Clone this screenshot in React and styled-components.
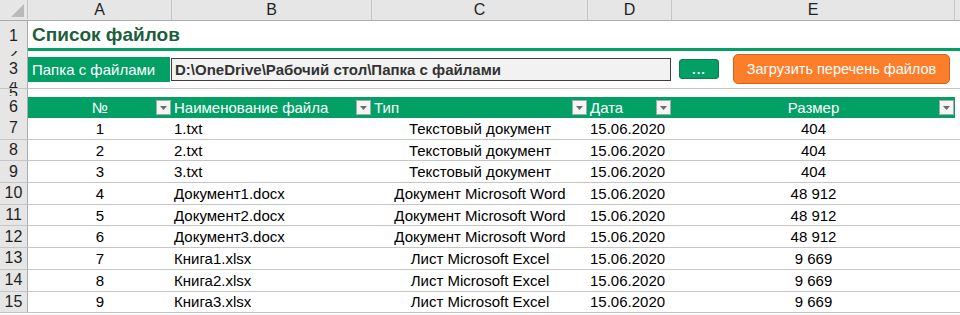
import styled, { createGlobalStyle } from "styled-components";

const GREEN = "#03a066";
const WIDTHS = [144, 200, 216, 84, 283];
const LETTERS = ["A", "B", "C", "D", "E"];

const files = [
  [1, "1.txt", "Текстовый документ", "15.06.2020", "404"],
  [2, "2.txt", "Текстовый документ", "15.06.2020", "404"],
  [3, "3.txt", "Текстовый документ", "15.06.2020", "404"],
  [4, "Документ1.docx", "Документ Microsoft Word", "15.06.2020", "48 912"],
  [5, "Документ2.docx", "Документ Microsoft Word", "15.06.2020", "48 912"],
  [6, "Документ3.docx", "Документ Microsoft Word", "15.06.2020", "48 912"],
  [7, "Книга1.xlsx", "Лист Microsoft Excel", "15.06.2020", "9 669"],
  [8, "Книга2.xlsx", "Лист Microsoft Excel", "15.06.2020", "9 669"],
  [9, "Книга3.xlsx", "Лист Microsoft Excel", "15.06.2020", "9 669"],
];

const headers = [
  { text: "№", align: "center" },
  { text: "Наименование файла", align: "left" },
  { text: "Тип", align: "left" },
  { text: "Дата", align: "left" },
  { text: "Размер", align: "center" },
];

const dataAlign = ["center", "left", "center", "left", "center"];

export default function App() {
  return (
    <>
      <GlobalStyle />
      <Sheet>
        <Row $h={21}>
          <Corner />
          {LETTERS.map((l, i) => (
            <ColHead key={l} $w={WIDTHS[i]}>{l}</ColHead>
          ))}
          <ColHead $w={10} />
        </Row>

        <Row $h={30}>
          <RowHead>1</RowHead>
          <TitleCell>Список файлов</TitleCell>
        </Row>
        <Row $h={5}>
          <RowHead $tiny>2</RowHead>
        </Row>

        <Row $h={26}>
          <RowHead>3</RowHead>
          <FolderLabel>Папка с файлами</FolderLabel>
          <PathArea>
            <PathBox>D:\OneDrive\Рабочий стол\Папка с файлами</PathBox>
          </PathArea>
          <ButtonArea>
            <DotsButton>...</DotsButton>
            <LoadButton>Загрузить перечень файлов</LoadButton>
          </ButtonArea>
        </Row>
        <Row $h={7} $line>
          <RowHead $tiny>4</RowHead>
        </Row>
        <Row $h={7}>
          <RowHead $tiny>5</RowHead>
        </Row>

        <Row $h={22}>
          <RowHead>6</RowHead>
          {headers.map((h, i) => (
            <HeadCell key={h.text} $w={WIDTHS[i]} $align={h.align}>
              {h.text}
              <Filter>
                <svg width="7" height="4" viewBox="0 0 7 4">
                  <path d="M0 0h7L3.5 4z" fill="#6b6b6b" />
                </svg>
              </Filter>
            </HeadCell>
          ))}
        </Row>

        {files.map((f, r) => (
          <Row key={r} $h={21.7} $line>
            <RowHead>{r + 7}</RowHead>
            {f.map((v, i) => (
              <Cell key={i} $w={WIDTHS[i]} $align={dataAlign[i]}>
                {v}
              </Cell>
            ))}
          </Row>
        ))}
      </Sheet>
    </>
  );
}

const GlobalStyle = createGlobalStyle`
  body {
    margin: 0;
    background: #ffffff;
    font-family: "Liberation Sans", Arial, sans-serif;
    overflow: hidden;
  }
`;

const Sheet = styled.div`
  width: 960px;
  height: 315px;
  overflow: hidden;
  display: flex;
  flex-direction: column;
  font-size: 15px;
  color: #000;
`;

const Row = styled.div`
  display: flex;
  flex: none;
  height: ${(p) => p.$h}px;
  box-sizing: border-box;
  border-bottom: ${(p) => (p.$line ? "1px solid #c6c6c6" : "none")};
`;

const Corner = styled.div`
  width: 28px;
  flex: none;
  background: #e6e6e6;
  border-right: 1px solid #c6c6c6;
  border-bottom: 1px solid #ababab;
  box-sizing: border-box;
  position: relative;
  &::after {
    content: "";
    position: absolute;
    right: 3px;
    bottom: 3px;
    border-style: solid;
    border-width: 0 0 13px 13px;
    border-color: transparent transparent #b9b9b9 transparent;
  }
`;

const ColHead = styled.div`
  width: ${(p) => p.$w}px;
  flex: none;
  box-sizing: border-box;
  background: #e6e6e6;
  border-right: 1px solid #c6c6c6;
  border-bottom: 1px solid #ababab;
  display: flex;
  align-items: center;
  justify-content: center;
  font-size: 16px;
  color: #1f1f1f;
`;

const RowHead = styled.div`
  width: 28px;
  flex: none;
  box-sizing: border-box;
  background: #e6e6e6;
  border-right: 1px solid #ababab;
  border-bottom: 1px solid #c6c6c6;
  margin-bottom: -1px;
  display: flex;
  align-items: center;
  justify-content: center;
  overflow: hidden;
  font-size: 16px;
  line-height: ${(p) => (p.$tiny ? "5px" : "normal")};
  color: #1f1f1f;
`;

const TitleCell = styled.div`
  flex: 1;
  box-sizing: border-box;
  border-bottom: 3px solid ${GREEN};
  display: flex;
  align-items: center;
  padding-left: 4px;
  font-size: 19px;
  font-weight: bold;
  color: #1d5e3c;
`;

const FolderLabel = styled.div`
  width: 142px;
  margin-top: 1px;
  flex: none;
  background: ${GREEN};
  color: #fff;
  display: flex;
  align-items: center;
  padding-left: 4px;
  box-sizing: border-box;
`;

const PathArea = styled.div`
  width: 502px;
  flex: none;
  display: flex;
  align-items: center;
  padding-left: 1px;
  box-sizing: border-box;
`;

const PathBox = styled.div`
  width: 500px;
  height: 23px;
  box-sizing: border-box;
  background: #f2f2f2;
  border: 1px solid #3f3f3f;
  display: flex;
  align-items: center;
  padding-left: 3px;
  font-weight: bold;
  color: #333;
`;

const ButtonArea = styled.div`
  flex: 1;
  display: flex;
  align-items: center;
  padding-left: 7px;
`;

const DotsButton = styled.div`
  width: 40px;
  height: 20px;
  box-sizing: border-box;
  background: ${GREEN};
  border: 1px solid #137a4f;
  border-radius: 3px;
  color: #fff;
  font-size: 13px;
  font-weight: bold;
  display: flex;
  align-items: center;
  justify-content: center;
  letter-spacing: 1px;
`;

const LoadButton = styled.div`
  width: 217px;
  height: 30px;
  margin-left: 14px;
  box-sizing: border-box;
  background: #fd7e2a;
  border: 1px solid #d0621c;
  border-radius: 5px;
  color: #fff;
  font-size: 14.5px;
  display: flex;
  align-items: center;
  justify-content: center;
`;

const HeadCell = styled.div`
  width: ${(p) => p.$w}px;
  flex: none;
  position: relative;
  box-sizing: border-box;
  background: ${GREEN};
  color: #fff;
  margin-top: 1px;
  display: flex;
  align-items: center;
  justify-content: ${(p) => (p.$align === "center" ? "center" : "flex-start")};
  padding-left: ${(p) => (p.$align === "center" ? 0 : 2)}px;
`;

const Filter = styled.div`
  position: absolute;
  right: 1px;
  top: 3px;
  width: 15px;
  height: 15px;
  box-sizing: border-box;
  background: #f4f4f4;
  border: 1px solid #a9a9a9;
  display: flex;
  align-items: center;
  justify-content: center;
`;

const Cell = styled.div`
  width: ${(p) => p.$w}px;
  flex: none;
  box-sizing: border-box;
  display: flex;
  align-items: center;
  white-space: nowrap;
  justify-content: ${(p) => (p.$align === "center" ? "center" : "flex-start")};
  padding-left: ${(p) => (p.$align === "center" ? 0 : 2)}px;
`;
